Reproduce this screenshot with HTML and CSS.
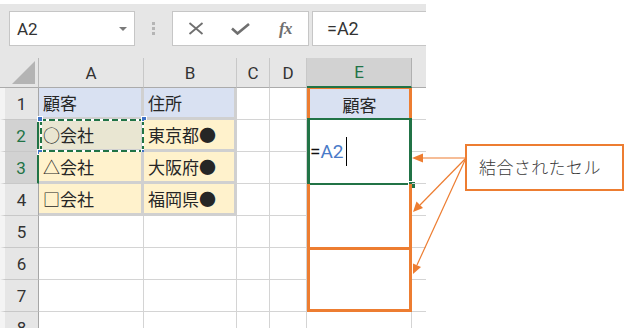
FILE: index.html
```html
<!DOCTYPE html>
<html lang="ja">
<head>
    <meta charset="UTF-8">
    <title>結合されたセル</title>
    <link rel="stylesheet" href="styles.css">
</head>
<body>
    <div class="app">
        <div class="toolbar">
            <div class="name-box">
                <span>A2</span>
                <span class="caret"></span>
            </div>
            <div class="grip"><i></i><i></i><i></i></div>
            <div class="fx-buttons">
                <span class="slot">
                    <svg width="16" height="13" viewBox="0 0 16 13" fill="none" stroke="#6f6f6f" stroke-width="1.8">
                        <line x1="1.5" y1="1" x2="14.5" y2="12"></line>
                        <line x1="14.5" y1="1" x2="1.5" y2="12"></line>
                    </svg>
                </span>
                <span class="slot">
                    <svg width="19" height="12" viewBox="0 0 19 12" fill="none" stroke="#6f6f6f" stroke-width="2.6" stroke-linejoin="miter">
                        <polyline points="1,5.5 6.5,10.5 18,1"></polyline>
                    </svg>
                </span>
                <span class="slot fx">fx</span>
            </div>
            <div class="formula-input">=A2</div>
        </div>

        <div class="sheet">
            <!-- column headers -->
            <div class="corner">
                <svg width="23" height="23" viewBox="0 0 23 23"><polygon points="23,0 23,23 0,23" fill="#b4b4b4"></polygon></svg>
            </div>
            <div class="col-head">A</div>
            <div class="col-head">B</div>
            <div class="col-head">C</div>
            <div class="col-head">D</div>
            <div class="col-head active">E</div>
            <div class="col-head last"></div>

            <!-- row 1 -->
            <div class="row-head">1</div>
            <div class="cell fill-head">顧客</div>
            <div class="cell fill-head">住所</div>
            <div class="cell"></div>
            <div class="cell"></div>
            <div class="cell e e-top">顧客</div>
            <div class="cell last"></div>

            <!-- row 2 -->
            <div class="row-head active">2</div>
            <div class="cell fill copied">
                ○会社
                <div class="marquee">
                    <b class="tl"></b><b class="tr"></b><b class="bl"></b><b class="br"></b>
                </div>
            </div>
            <div class="cell fill">東京都●</div>
            <div class="cell"></div>
            <div class="cell"></div>
            <div class="cell e merged editing">
                <span>=</span><span class="ref">A2</span><span class="cursor"></span>
                <div class="active-box"><b></b></div>
            </div>
            <div class="cell last"></div>

            <!-- row 3 -->
            <div class="row-head active">3</div>
            <div class="cell fill">△会社</div>
            <div class="cell fill">大阪府●</div>
            <div class="cell"></div>
            <div class="cell"></div>
            <div class="cell last"></div>

            <!-- row 4 -->
            <div class="row-head">4</div>
            <div class="cell fill">□会社</div>
            <div class="cell fill">福岡県●</div>
            <div class="cell"></div>
            <div class="cell"></div>
            <div class="cell e merged e-mid"></div>
            <div class="cell last"></div>

            <!-- row 5 -->
            <div class="row-head">5</div>
            <div class="cell"></div>
            <div class="cell"></div>
            <div class="cell"></div>
            <div class="cell"></div>
            <div class="cell last"></div>

            <!-- row 6 -->
            <div class="row-head">6</div>
            <div class="cell"></div>
            <div class="cell"></div>
            <div class="cell"></div>
            <div class="cell"></div>
            <div class="cell e merged e-bottom"></div>
            <div class="cell last"></div>

            <!-- row 7 -->
            <div class="row-head">7</div>
            <div class="cell"></div>
            <div class="cell"></div>
            <div class="cell"></div>
            <div class="cell"></div>
            <div class="cell last"></div>

            <!-- row 8 -->
            <div class="row-head">8</div>
            <div class="cell"></div>
            <div class="cell"></div>
            <div class="cell"></div>
            <div class="cell"></div>
            <div class="cell"></div>
            <div class="cell last"></div>
        </div>
    </div>

    <!-- callout drawn over the sheet -->
    <svg class="arrows" width="630" height="328" viewBox="0 0 630 328">
        <g stroke="#ed7d31" stroke-width="1.2">
            <line x1="466" y1="158" x2="420" y2="158"></line>
            <line x1="466" y1="158" x2="420" y2="205"></line>
            <line x1="466" y1="158" x2="417" y2="265"></line>
        </g>
        <g fill="#ed7d31">
            <polygon points="412,158 423,153.5 423,162.5"></polygon>
            <polygon points="413,212 423,208 416.5,201.5"></polygon>
            <polygon points="413,274 421,267 413,263.5"></polygon>
        </g>
    </svg>
    <div class="callout">結合されたセル</div>
</body>
</html>
```

FILE: styles.css
```css
:root {
    --ui-gray: #e6e6e6;
    --head-active: #d2d2d2;
    --grid-line: #d4d4d4;
    --head-line: #b9b9b9;
    --table-line: #d0d0d0;
    --excel-green: #217346;
    --accent-orange: #ed7d31;
    --fill-blue: #d9e1f2;
    --fill-yellow: #fff2cc;
    --text-main: #262626;
}

body {
    margin: 0;
    width: 630px;
    height: 328px;
    overflow: hidden;
    position: relative;
    background-color: #ffffff;
    color: var(--text-main);
    font-family: Roboto, "Noto Sans CJK JP", sans-serif;
}

.app {
    width: 426px;
    padding-top: 4px;
}

/* ---- formula bar ---- */
.toolbar {
    height: 54px;
    box-sizing: border-box;
    padding: 7px 0 0 9px;
    background-color: var(--ui-gray);
    display: flex;
    align-items: flex-start;
}

.name-box {
    width: 126px;
    height: 35px;
    box-sizing: border-box;
    border: 1px solid #c6c6c6;
    background-color: #ffffff;
    display: flex;
    align-items: center;
    padding-left: 7px;
    font-size: 17px;
    color: #333;
}

.caret {
    margin-left: auto;
    margin-right: 7px;
    width: 0;
    height: 0;
    border-left: 4px solid transparent;
    border-right: 4px solid transparent;
    border-top: 4px solid #7a7a7a;
}

.grip {
    margin: 11px 0 0 17px;
    display: flex;
    flex-direction: column;
    gap: 2px;
}

.grip i {
    display: block;
    width: 3px;
    height: 3px;
    background-color: #b5b5b5;
}

.fx-buttons {
    margin-left: 17px;
    width: 137px;
    height: 35px;
    box-sizing: border-box;
    border: 1px solid #c6c6c6;
    background-color: #ffffff;
    display: flex;
    align-items: center;
}

.slot {
    width: 45px;
    display: flex;
    justify-content: center;
    align-items: center;
}

.fx {
    font-family: "Liberation Serif", serif;
    font-style: italic;
    font-weight: bold;
    font-size: 17px;
    color: #6f6f6f;
    letter-spacing: -0.5px;
}

.formula-input {
    flex: 1;
    margin-left: 3px;
    height: 35px;
    box-sizing: border-box;
    border: 1px solid #c6c6c6;
    border-right: none;
    background-color: #ffffff;
    display: flex;
    align-items: center;
    padding-left: 14px;
    font-size: 18px;
    color: #333;
}

/* ---- grid ---- */
.sheet {
    display: grid;
    grid-template-columns: 39px 105px 93px 33px 37px 105px 14px;
    grid-template-rows: 30px repeat(8, 32px);
}

.corner {
    background-color: var(--ui-gray);
    border-right: 1px solid var(--head-line);
    border-bottom: 1px solid #ababab;
    box-sizing: border-box;
    display: flex;
    align-items: flex-end;
    justify-content: flex-end;
    padding: 0 3px 3px 0;
}

.col-head {
    background-color: var(--ui-gray);
    border-right: 1px solid #c8c8c8;
    border-bottom: 1px solid #ababab;
    box-sizing: border-box;
    display: flex;
    align-items: center;
    justify-content: center;
    font-size: 17px;
    color: #333;
}

.col-head.active {
    background-color: var(--head-active);
    color: var(--excel-green);
    border-bottom: 2px solid var(--excel-green);
    border-right-color: #b0b0b0;
}

.col-head.last {
    border-right: none;
}

.row-head {
    background-color: var(--ui-gray);
    border-left: 5px solid #f4f4f4;
    border-right: 1px solid #a6a6a6;
    border-bottom: 1px solid #c8c8c8;
    box-sizing: border-box;
    display: flex;
    align-items: center;
    justify-content: center;
    font-size: 17px;
    color: #333;
}

.row-head.active {
    background-color: var(--head-active);
    color: var(--excel-green);
    border-right: 2px solid var(--excel-green);
}

.cell {
    border-right: 1px solid var(--grid-line);
    border-bottom: 1px solid var(--grid-line);
    box-sizing: border-box;
    display: flex;
    align-items: center;
    padding-left: 4px;
    font-family: "Noto Sans CJK JP", sans-serif;
    font-size: 17px;
    white-space: nowrap;
    position: relative;
}

.cell.last {
    border-right: none;
}

.fill-head,
.fill {
    border-right: 3px solid var(--table-line);
    border-bottom: 3px solid var(--table-line);
}

.fill-head {
    background-color: var(--fill-blue);
}

.fill {
    background-color: var(--fill-yellow);
}

.fill.copied {
    background-color: #e9e6d2;
}

/* marching ants round the copied cell */
.marquee {
    position: absolute;
    top: -1px;
    left: 1px;
    right: -3px;
    bottom: -3px;
    background:
        repeating-linear-gradient(90deg, var(--excel-green) 0 6px, #fff 6px 9px) top / 100% 2px no-repeat,
        repeating-linear-gradient(90deg, var(--excel-green) 0 6px, #fff 6px 9px) bottom / 100% 2px no-repeat,
        repeating-linear-gradient(180deg, var(--excel-green) 0 6px, #fff 6px 9px) left / 2px 100% no-repeat,
        repeating-linear-gradient(180deg, var(--excel-green) 0 6px, #fff 6px 9px) right / 2px 100% no-repeat;
}

.marquee b {
    position: absolute;
    width: 4px;
    height: 4px;
    background-color: #3f72c5;
    border: 1px solid #ffffff;
}

.marquee .tl { top: -3px; left: -3px; }
.marquee .tr { top: -3px; right: -3px; }
.marquee .bl { bottom: -3px; left: -3px; }
.marquee .br { bottom: -3px; right: -3px; }

/* ---- column E, merged cells ---- */
.e {
    border-left: 3px solid var(--accent-orange);
    border-right: 3px solid var(--accent-orange);
    padding-left: 0;
}

.e-top {
    border-top: 1px solid var(--accent-orange);
    background-color: var(--fill-blue);
    justify-content: center;
}

.merged {
    grid-row: span 2;
}

.e-mid {
    border-bottom: 1px solid var(--accent-orange);
}

.e-bottom {
    border-top: 2px solid var(--accent-orange);
    border-bottom: 3px solid var(--accent-orange);
}

.editing {
    font-family: Roboto, sans-serif;
    font-size: 19px;
    color: #111;
}

.editing .ref {
    color: #4a7bc8;
}

.cursor {
    display: inline-block;
    width: 1px;
    height: 29px;
    margin-left: 2px;
    background-color: #000;
}

.active-box {
    position: absolute;
    top: -2px;
    left: -3px;
    right: -3px;
    bottom: -2px;
    border: 2px solid var(--excel-green);
    border-left-width: 3px;
    border-right-width: 3px;
}

.active-box b {
    position: absolute;
    right: -6px;
    bottom: -5px;
    width: 6px;
    height: 6px;
    background-color: var(--excel-green);
    border: 1px solid #ffffff;
    border-right: none;
    border-bottom: none;
}

/* ---- callout ---- */
.arrows {
    position: absolute;
    top: 0;
    left: 0;
}

.callout {
    position: absolute;
    left: 465px;
    top: 144px;
    width: 159px;
    height: 47px;
    box-sizing: border-box;
    border: 2px solid var(--accent-orange);
    background-color: #ffffff;
    display: flex;
    align-items: center;
    padding: 0 0 2px 12px;
    font-family: "Noto Sans CJK JP", sans-serif;
    font-size: 17px;
    font-weight: 300;
    letter-spacing: 0.4px;
    color: #3a3a3a;
}
```
